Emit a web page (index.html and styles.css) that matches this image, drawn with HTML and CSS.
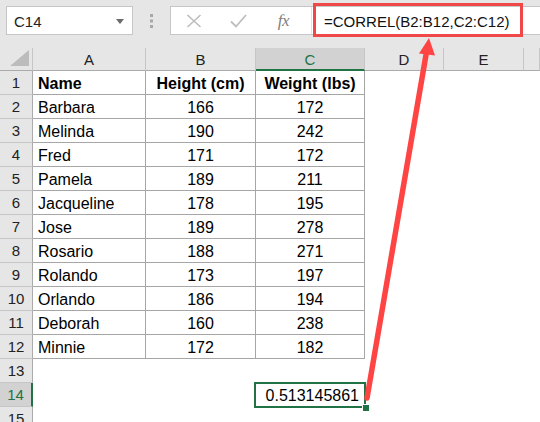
FILE: index.html
```html
<!DOCTYPE html>
<html lang="en">
<head>
  <meta charset="UTF-8">
  <meta name="viewport" content="width=device-width, initial-scale=1.0">
  <title>CORREL example</title>
  <link rel="stylesheet" href="styles.css">
</head>
<body>
  <div class="app">

    <!-- Name box + formula bar -->
    <div class="toolbar">
      <div class="namebox">
        <span>C14</span>
        <svg width="8" height="5" viewBox="0 0 8 5"><path d="M0 0h8L4 5z" fill="#6a6a6a"/></svg>
      </div>
      <div class="grip">
        <svg width="3" height="14" viewBox="0 0 3 14">
          <rect x="0" y="0" width="3" height="3" fill="#a8a8a8"/>
          <rect x="0" y="5.5" width="3" height="3" fill="#a8a8a8"/>
          <rect x="0" y="11" width="3" height="3" fill="#a8a8a8"/>
        </svg>
      </div>
      <div class="formulabar">
        <div class="fbtns">
          <span class="fbtn">
            <svg width="16" height="14" viewBox="0 0 16 14"><path d="M1.5 1L14.5 13M14.5 1L1.5 13" stroke="#bdbdbd" stroke-width="1.6" fill="none"/></svg>
          </span>
          <span class="fbtn">
            <svg width="17" height="14" viewBox="0 0 17 14"><path d="M1 7.5L6 12.5L16 1" stroke="#bdbdbd" stroke-width="1.8" fill="none"/></svg>
          </span>
          <span class="fbtn fx">fx</span>
        </div>
        <div class="finput">=CORREL(B2:B12,C2:C12)</div>
      </div>
    </div>

    <!-- Worksheet -->
    <div class="sheet" id="sheet"></div>

    <!-- Annotation -->
    <div class="callout"></div>
    <svg class="arrow" width="540" height="422" viewBox="0 0 540 422">
      <line x1="367" y1="398" x2="426.5" y2="52" stroke="#ff4444" stroke-width="5.5" stroke-linecap="round"/>
      <polygon points="429,38 419,53.5 435,55.5" fill="#ff4444"/>
    </svg>
  </div>

  <script>
    const data = [
      ["Name", "Height (cm)", "Weight (lbs)"],
      ["Barbara", 166, 172],
      ["Melinda", 190, 242],
      ["Fred", 171, 172],
      ["Pamela", 189, 211],
      ["Jacqueline", 178, 195],
      ["Jose", 189, 278],
      ["Rosario", 188, 271],
      ["Rolando", 173, 197],
      ["Orlando", 186, 194],
      ["Deborah", 160, 238],
      ["Minnie", 172, 182]
    ];
    const cols = ["A", "B", "C", "D", "E", ""];
    const sheet = document.getElementById('sheet');

    function cell(cls, text) {
      const d = document.createElement('div');
      d.className = cls;
      if (text !== undefined) d.textContent = text;
      sheet.appendChild(d);
      return d;
    }

    // header row
    const corner = cell('corner');
    corner.innerHTML = '<svg width="19" height="16" viewBox="0 0 19 16"><path d="M19 0V16H0z" fill="#bcbcbc"/></svg>';
    cols.forEach(function (c) {
      cell(c === 'C' ? 'hd on' : 'hd', c);
    });

    for (let r = 1; r <= 15; r++) {
      cell(r === 14 ? 'rh on' : 'rh', r);
      const row = data[r - 1];
      for (let c = 0; c < 6; c++) {
        if (row && c < 3) {
          let cls = 'cell t';
          cls += c === 0 ? ' left' : ' mid';
          if (r === 1) cls += ' bold';
          cell(cls, row[c]);
        } else if (r === 14 && c === 2) {
          const s = cell('cell sel', '0.513145861');
          const h = document.createElement('span');
          h.className = 'handle';
          s.appendChild(h);
        } else {
          cell('cell');
        }
      }
    }
  </script>
</body>
</html>
```

FILE: styles.css
```css
body {
  margin: 0;
  font-family: "Liberation Sans", Arial, sans-serif;
  color: #000;
}

.app {
  position: relative;
  width: 540px;
  height: 422px;
  overflow: hidden;
  background: #fff;
}

/* ---- top bar ---- */
.toolbar {
  height: 48px;
  box-sizing: border-box;
  padding: 6px 0 0 6px;
  background: #e6e6e6;
  display: flex;
  align-items: flex-start;
}

.namebox {
  width: 127px;
  height: 29px;
  box-sizing: border-box;
  background: #fff;
  border: 1px solid #c6c6c6;
  display: flex;
  align-items: center;
  justify-content: space-between;
  padding: 1px 8px 0 7px;
  font-size: 15px;
  color: #222;
}

.grip {
  width: 37px;
  display: flex;
  justify-content: center;
  padding-top: 8px;
}

.formulabar {
  flex: 1;
  height: 29px;
  box-sizing: border-box;
  background: #fff;
  border: 1px solid #c6c6c6;
  border-right: none;
  display: flex;
}

.fbtns {
  width: 140px;
  display: flex;
  align-items: center;
  border-right: 1px solid #e2e2e2;
}

.fbtn {
  width: 45px;
  display: flex;
  justify-content: center;
  align-items: center;
}

.fx {
  font-family: "Liberation Serif", "Times New Roman", serif;
  font-style: italic;
  font-size: 17px;
  color: #808080;
  letter-spacing: -0.5px;
}

.finput {
  padding: 1px 0 0 12px;
  font-size: 15px;
  line-height: 27px;
  color: #111;
}

/* ---- grid ---- */
.sheet {
  display: grid;
  grid-template-columns: 33px 113px 110px 109px 79px 80px 16px;
  grid-template-rows: 23px repeat(15, 24px);
}

.corner {
  background: #e6e6e6;
  border-right: 1px solid #c6c6c6;
  border-bottom: 1px solid #ababab;
  display: flex;
  justify-content: flex-end;
  align-items: flex-end;
  padding: 0 3px 4px 0;
}

.hd {
  background: #e6e6e6;
  border-right: 1px solid #c6c6c6;
  border-bottom: 1px solid #ababab;
  font-size: 15px;
  line-height: 24px;
  text-align: center;
  color: #222;
}

.hd.on {
  background: #d2d2d2;
  color: #217346;
  border-bottom: 2px solid #217346;
}

.rh {
  background: #e6e6e6;
  border-right: 1px solid #ababab;
  border-bottom: 1px solid #c6c6c6;
  font-size: 15px;
  line-height: 24px;
  text-align: center;
  color: #222;
}

.rh.on {
  background: #d2d2d2;
  color: #217346;
  border-right: 2px solid #217346;
}

.sheet > div {
  box-sizing: border-box;
}

.cell {
  position: relative;
  font-size: 16px;
  line-height: 24px;
  padding: 1px 5px 0;
  white-space: nowrap;
}

.cell.t {
  border-right: 1px solid #a6a6a6;
  border-bottom: 1px solid #a6a6a6;
}

.left { text-align: left; }
.mid { text-align: center; }
.bold { font-weight: bold; }

.sel {
  text-align: right;
  padding-right: 6px;
}

.sel::after {
  content: "";
  position: absolute;
  left: -2px;
  top: -1px;
  right: -1px;
  bottom: -1px;
  border: 2px solid #217346;
}

.handle {
  position: absolute;
  right: -5px;
  bottom: -5px;
  width: 6px;
  height: 6px;
  background: #217346;
  border: 1px solid #fff;
  z-index: 1;
}

/* ---- annotation ---- */
.callout {
  position: absolute;
  left: 313px;
  top: 3px;
  width: 210px;
  height: 34px;
  box-sizing: border-box;
  border: 3px solid #f04848;
}

.arrow {
  position: absolute;
  left: 0;
  top: 0;
  pointer-events: none;
}
```
